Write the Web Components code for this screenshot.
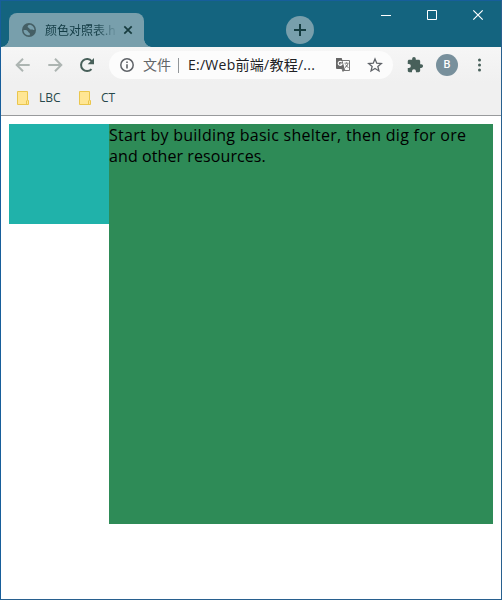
<!DOCTYPE html>
<html lang="zh">
<head>
<meta charset="utf-8">
<title>颜色对照表</title>
<style>
html,body{margin:0;height:100%;overflow:hidden}
body{font-family:"Open Sans","Noto Sans CJK SC",sans-serif}
</style>
</head>
<body>
<browser-window>
  <title-bar slot="chrome"><browser-tab>颜色对照表.h</browser-tab></title-bar>
  <tool-bar slot="chrome"><address-box slot="address"><span slot="kind">文件</span>E:/Web前端/教程/...</address-box></tool-bar>
  <bookmark-bar slot="chrome"><bookmark-item style="--w:32px">LBC</bookmark-item><bookmark-item>CT</bookmark-item></bookmark-bar>
  <demo-page><span style="letter-spacing:.27px">Start by building basic shelter, then dig for ore</span><br><span style="letter-spacing:.09px">and other resources.</span></demo-page>
</browser-window>
<script>
const define = (name, html) => customElements.define(name, class extends HTMLElement {
  constructor() {
    super();
    this.attachShadow({mode: 'open'}).innerHTML = html;
  }
});

define('browser-window', `<style>
:host{display:flex;flex-direction:column;box-sizing:border-box;width:502px;height:600px;border:1px solid #175e9b;border-right-color:#28608f;border-bottom-color:#28608f;background:#fff}
</style><slot name="chrome"></slot><slot></slot>`);

define('title-bar', `<style>
:host{display:flex;height:46px;flex:none;background:#14647f;align-items:flex-end;padding-left:8px}
.new{width:28px;height:28px;border-radius:50%;background:#789fac;margin:0 0 3px 142px;flex:none}
.win{display:flex;align-self:flex-start;margin-left:49px}
.win svg{width:46px;height:30px;flex:none}
svg{display:block}
</style><slot></slot>
<div class="new"><svg width="28" height="28"><path d="M14 8v12M8 14h12" stroke="#153c40" stroke-width="2"/></svg></div>
<div class="win">
<svg viewBox="0 0 46 30"><path d="M18 14.5h10" stroke="#fff"/></svg>
<svg viewBox="0 0 46 30"><path d="M18.500 9.500h9v9h-9z" fill="none" stroke="#fff"/></svg>
<svg viewBox="0 0 46 30"><path d="M18.300 9.300l9.400 9.400M27.700 9.300l-9.400 9.400" stroke="#fff" stroke-width="1.200"/></svg>
</div>`);

define('browser-tab', `<style>
:host{display:flex;position:relative;align-items:center;width:135px;height:34px;box-sizing:border-box;background:#789fac;border-radius:8px 8px 0 0;padding-left:13px;flex:none}
:host::before,:host::after{content:"";position:absolute;bottom:0;width:8px;height:8px}
:host::before{right:100%;background:radial-gradient(circle at 0 0,transparent 7.500px,#789fac 8px)}
:host::after{left:100%;background:radial-gradient(circle at 100% 0,transparent 7.500px,#789fac 8px)}
.t{margin-left:9px;padding-top:2px;width:71px;overflow:hidden;white-space:nowrap;font-size:12px;line-height:18px;color:#123b44;-webkit-mask-image:linear-gradient(90deg,#000 50px,transparent 74px)}
svg{flex:none}
</style>
<svg width="14" height="14" viewBox="0 0 14 14"><circle cx="7" cy="7" r="7" fill="#455f65"/><path d="M1.500 7.200c2.300-.3 4.200.1 4.600 1.500.3 1.100 1.700.7 1.700 1.800v1.800C4.600 12.800 1.600 10.500 1.500 7.200zM8.200 1.700C6 1.800 5.500 3 5.700 4c.3 1 1.500.4 1.700 1.500.2 1 1.400 1.100 2.500.9 1-.2 1.100.9 2.500.6C12.400 4.500 10.800 2.300 8.200 1.700z" fill="#789fac"/></svg>
<div class="t"><slot></slot></div>
<svg width="12" height="12" viewBox="0 0 12 12" style="margin-left:6px"><path d="M2.300 2.300l7.400 7.400M9.700 2.300L2.300 9.700" stroke="#163b3e" stroke-width="1.700"/></svg>`);

define('tool-bar', `<style>
:host{display:flex;height:36px;flex:none;align-items:center;padding:0 7px 0 6px;background:linear-gradient(#f6f6f6,#f0f0f0)}
svg,.av{flex:none;display:block}
svg{width:32px;height:32px}
.av{width:22px;height:22px;margin:0 5px;border-radius:50%;background:#78909c;color:#fff;font:500 11px/22px Roboto,sans-serif;text-align:center}
</style>
<svg viewBox="0 0 32 32"><path d="M22.700 16H10.500M16 9.700L9.700 16l6.300 6.300" fill="none" stroke="#adb5b2" stroke-width="2"/></svg>
<svg viewBox="0 0 32 32"><path d="M9.300 16h12.200M16 9.700l6.300 6.300-6.300 6.300" fill="none" stroke="#adb5b2" stroke-width="2"/></svg>
<svg viewBox="0 0 32 32"><path d="M20.500 20.100A6 6 0 1 1 20.800 12.400" fill="none" stroke="#48605a" stroke-width="2"/><path d="M23 9v6.300h-6.300z" fill="#48605a"/></svg>
<slot name="address"></slot>
<svg viewBox="0 0 32 32" style="margin-left:6px"><path transform="translate(7.300 7.200) scale(.73)" d="M20.500 11H19V7c0-1.100-.9-2-2-2h-4V3.500a2.500 2.500 0 0 0-5 0V5H4c-1.100 0-2 .9-2 2v3.800h1.500a2.700 2.700 0 0 1 0 5.400H2V20c0 1.100.9 2 2 2h3.800v-1.500a2.700 2.700 0 0 1 5.400 0V22H17c1.100 0 2-.9 2-2v-4h1.500a2.500 2.500 0 0 0 0-5z" fill="#48605a"/></svg>
<div class="av">B</div>
<svg viewBox="0 0 32 32"><g fill="#48605a"><circle cx="16.500" cy="11" r="1.500"/><circle cx="16.500" cy="16" r="1.500"/><circle cx="16.500" cy="21" r="1.500"/></g></svg>`);

define('address-box', `<style>
:host{display:flex;align-items:center;box-sizing:border-box;width:284px;height:28px;margin-left:6px;flex:none;border-radius:14px;background:#fcfcfc;padding:0 10px 0 11px;font-size:14px;line-height:20px;color:#202124;white-space:nowrap}
.k{color:#626669;margin-left:9px;width:28px}
.sep{width:1px;height:15px;background:#929699;margin:0 9px 0 7px}
.u{width:147px;letter-spacing:.26px}
svg{flex:none}
</style>
<svg width="14" height="14" viewBox="0 0 14 14"><circle cx="7" cy="7" r="6.200" fill="none" stroke="#5f6368" stroke-width="1.500"/><path d="M7 6.200v4.300M7 3.500v1.600" stroke="#5f6368" stroke-width="1.600"/></svg>
<div class="k"><slot name="kind"></slot></div><div class="sep"></div><div class="u"><slot></slot></div>
<svg width="16" height="16" viewBox="0 0 16 16"><path d="M6 3.500h8.500v10H7.500" fill="#fcfcfc" stroke="#777" /><path d="M1 1h5.700l3 11H2a1 1 0 0 1-1-1z" fill="#666"/><path d="M6.900 5.300A2 2 0 1 0 7.100 7H5.200" fill="none" stroke="#fff" stroke-width="1.100"/><path d="M9.500 6.200h4M11.500 5.300v1M13 6.400c-.4 2-1.500 3.200-3 4.200M10.500 7.500l3 3.500M7 12h3l-2 2.500z" stroke="#777" fill="#666" stroke-width=".9"/></svg>
<svg width="16" height="16" viewBox="0 0 16 16" style="margin-left:16px"><path d="M8 1.900l1.750 4.250 4.600.35-3.500 3 1.100 4.450L8 11.550l-3.950 2.400 1.100-4.450-3.500-3 4.600-.35z" fill="none" stroke="#5f6368" stroke-width="1.300"/></svg>`);

define('bookmark-bar', `<style>
:host{display:flex;box-sizing:border-box;height:33px;flex:none;align-items:center;background:#f0f0f0;border-bottom:1px solid #989a9c;padding:0 0 3px 16px}
</style><slot></slot>`);

define('bookmark-item', `<style>
:host{display:flex;align-items:center;font-size:12px;line-height:16px;color:#27484b}
svg{margin-right:10px;flex:none}
.n{width:var(--w,24px);margin-right:8px;letter-spacing:-.05px}
</style>
<svg width="12" height="14" viewBox="0 0 12 14"><path d="M.5.500h10v9h1v4H.5z" fill="#ffe694" stroke="#eac64d"/><path d="M9.500 9.500v4" stroke="#eac64d"/></svg>
<div class="n"><slot></slot></div>`);

define('demo-page', `<style>
:host{display:flex;flex:1;padding:8px;align-items:flex-start}
.side{width:100px;height:100px;background:#20b2aa;flex:none}
.main{flex:1;box-sizing:border-box;height:400px;padding-top:1px;background:#2e8b57;font-size:16px;line-height:21px;color:#000;white-space:nowrap}
</style><div class="side"></div><div class="main"><slot></slot></div>`);
</script>
</body>
</html>
